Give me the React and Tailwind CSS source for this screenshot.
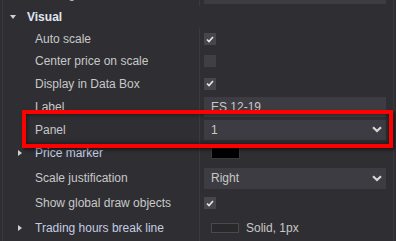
import React from 'react';

const Check = () => (
  <div className="flex h-[12px] w-[12px] items-center justify-center bg-[#46464c]">
    <svg width="8" height="7" viewBox="0 0 8 7">
      <polyline points="1,3.5 3,5.5 7,1" fill="none" stroke="#e8e8e8" strokeWidth="1.6" />
    </svg>
  </div>
);

const Empty = () => <div className="h-[12px] w-[12px] bg-[#3f3f45]" />;

const Chevron = () => (
  <svg width="10" height="7" viewBox="0 0 10 7">
    <polyline points="1,1.2 5,5 9,1.2" fill="none" stroke="#d6d6d6" strokeWidth="2.2" />
  </svg>
);

const Input = ({ children, select, h = 'h-[20px]' }) => (
  <div className={`flex ${h} w-[182px] items-center justify-between bg-[#3c3c42] pl-[7px] pr-[4px] text-[#c8c8c8]`}>
    <span>{children}</span>
    {select && <Chevron />}
  </div>
);

function Row({ h, label, expander, children, blue }) {
  return (
    <div className={`flex ${h} items-stretch`}>
      <div className="flex w-[196px] items-center pl-[15px]">
        <div className="w-[17px]">
          {expander && (
            <div className="h-0 w-0 border-y-[3px] border-l-[4px] border-y-transparent border-l-[#d0d0d0]" />
          )}
        </div>
        <span className={blue ? 'text-[#c3cde2]' : 'text-[#c8c8c8]'}>{label}</span>
      </div>
      <div className="w-px bg-[#3a3a3f]" />
      <div className="flex items-center pl-[4px]">{children}</div>
    </div>
  );
}

export default function App() {
  return (
    <div className="relative h-[241px] w-[396px] overflow-hidden bg-[#2f2f33] font-['Liberation_Sans',Arial,sans-serif] text-[12px]">
      <div className="ml-[2px] mt-[-18px] w-[392px] border-x border-[#38383d]">
        <Row h="h-[24px]" label="Trading hours">
          <Input> </Input>
        </Row>

        <div className="flex h-[22px] items-center pl-[7px]">
          <div className="h-0 w-0 border-x-[3.5px] border-t-[4px] border-x-transparent border-t-[#d0d0d0]" />
          <span className="ml-[11px] font-bold text-[#e0e6f2]">Visual</span>
        </div>

        <Row h="h-[22px]" label="Auto scale"><Check /></Row>
        <Row h="h-[22px]" label="Center price on scale"><Empty /></Row>
        <Row h="h-[23px]" label="Display in Data Box"><Check /></Row>
        <Row h="h-[23px]" label="Label"><Input>ES 12-19</Input></Row>
        <Row h="h-[23px]" label="Panel"><Input select>1</Input></Row>
        <Row h="h-[24px]" label="Price marker" expander blue>
          <div className="ml-[7px] h-[12px] w-[29px] border border-[#3a3a3a] bg-black" />
        </Row>
        <Row h="h-[26px]" label="Scale justification"><Input select h="h-[21px]">Right</Input></Row>
        <Row h="h-[24px]" label="Show global draw objects"><Check /></Row>
        <Row h="h-[26px]" label="Trading hours break line" expander blue>
          <div className="ml-[7px] h-[10px] w-[28px] border border-[#4a4a4e] bg-[#29292c]" />
          <span className="ml-[7px] text-[#c8c8c8]">Solid, 1px</span>
        </Row>
      </div>

      {/* highlight box */}
      <div className="absolute left-[22px] top-[110px] h-[38px] w-[371px] border-4 border-[#ff0000] shadow-[inset_0_0_5px_rgba(0,0,0,0.6),2px_2px_3px_rgba(0,0,0,0.5)]" />
    </div>
  );
}
